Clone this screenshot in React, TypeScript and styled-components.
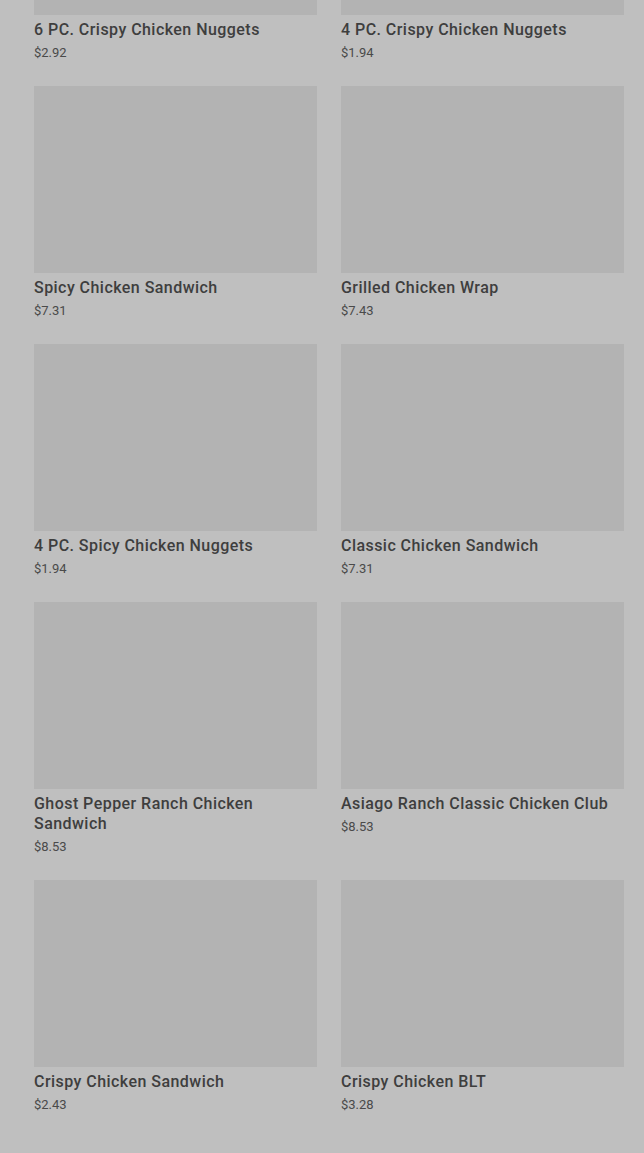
import React from "react";
import styled, { createGlobalStyle } from "styled-components";

const GlobalStyle = createGlobalStyle`
  html, body {
    margin: 0;
    padding: 0;
    background: #bfbfbf;
  }
  body {
    font-family: Roboto, "Liberation Sans", Arial, sans-serif;
    overflow: hidden;
  }
`;

const Page = styled.main`
  min-height: 1153px;
  background: #bfbfbf;
  padding: 0 20px 24px 34px;
  box-sizing: border-box;
`;

const Grid = styled.div`
  display: grid;
  grid-template-columns: repeat(2, 283px);
  column-gap: 24px;
  row-gap: 24px;
`;

const Card = styled.article`
  display: flex;
  flex-direction: column;
`;

const Thumb = styled.div<{ $h: number }>`
  height: ${(p) => p.$h}px;
  background: #b3b3b3;
`;

const Title = styled.h3`
  margin: 5px 0 0;
  font-size: 16px;
  line-height: 20px;
  font-weight: 500;
  color: #3e3e3e;
  letter-spacing: 0.45px;
`;

const Price = styled.span`
  margin-top: 4px;
  font-size: 13px;
  line-height: 18px;
  color: #4a4a4a;
`;

const items = [
  { name: "6 PC. Crispy Chicken Nuggets", price: "$2.92" },
  { name: "4 PC. Crispy Chicken Nuggets", price: "$1.94" },
  { name: "Spicy Chicken Sandwich", price: "$7.31" },
  { name: "Grilled Chicken Wrap", price: "$7.43" },
  { name: "4 PC. Spicy Chicken Nuggets", price: "$1.94" },
  { name: "Classic Chicken Sandwich", price: "$7.31" },
  { name: "Ghost Pepper Ranch Chicken Sandwich", price: "$8.53" },
  { name: "Asiago Ranch Classic Chicken Club", price: "$8.53" },
  { name: "Crispy Chicken Sandwich", price: "$2.43" },
  { name: "Crispy Chicken BLT", price: "$3.28" },
];

export default function App() {
  return (
    <>
      <GlobalStyle />
      <Page>
        <Grid>
          {items.map((it, i) => (
            <Card key={i}>
              <Thumb $h={i < 2 ? 15 : 187} />
              <Title>{it.name}</Title>
              <Price>{it.price}</Price>
            </Card>
          ))}
        </Grid>
      </Page>
    </>
  );
}
